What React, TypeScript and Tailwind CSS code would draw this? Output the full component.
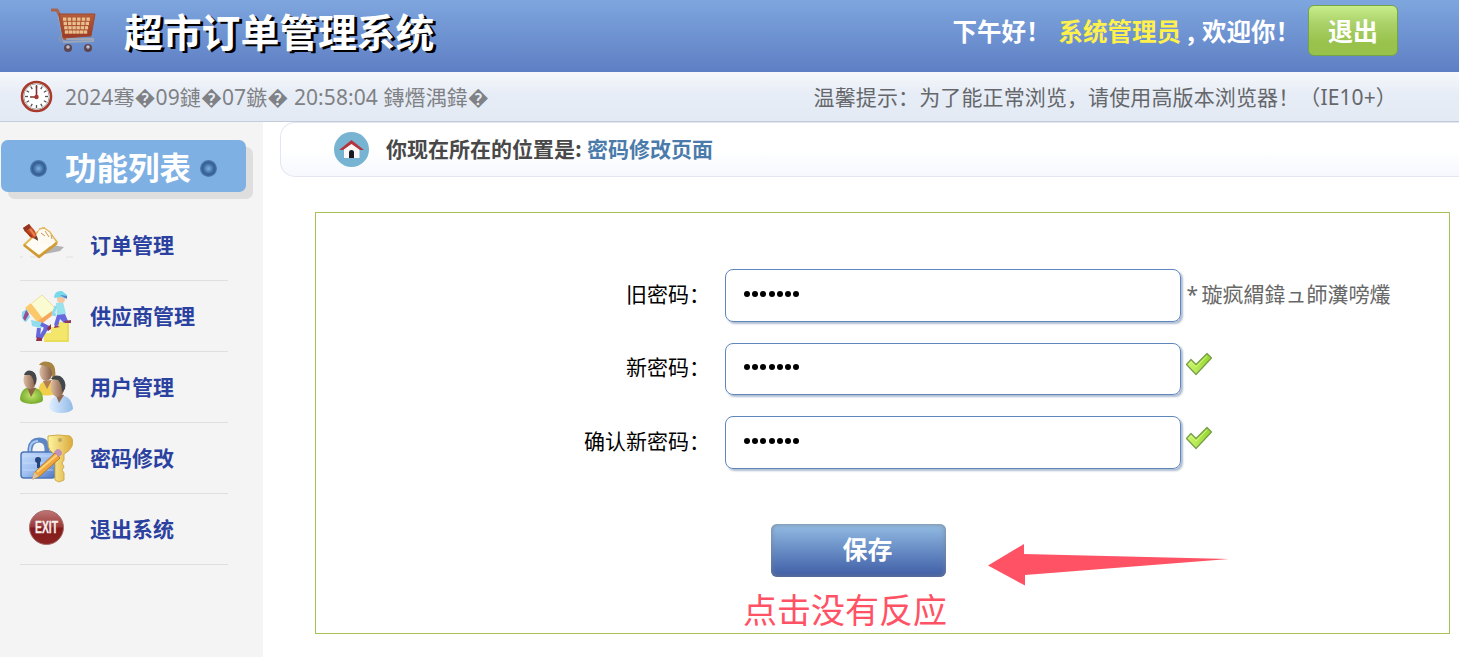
import { type ReactNode } from "react";

const menu: { label: string; icon: ReactNode }[] = [
  { label: "订单管理", icon: <OrderIcon /> },
  { label: "供应商管理", icon: <SupplierIcon /> },
  { label: "用户管理", icon: <UsersIcon /> },
  { label: "密码修改", icon: <PasswordIcon /> },
  { label: "退出系统", icon: <ExitIcon /> },
];

const fields = [
  { label: "旧密码：", valid: false },
  { label: "新密码：", valid: true },
  { label: "确认新密码：", valid: true },
];

export default function App() {
  return (
    <div className="flex h-[657px] w-[1459px] flex-col overflow-hidden bg-white font-['Noto_Sans','Noto_Sans_CJK_SC',sans-serif] text-[21px] leading-none whitespace-nowrap">
      <header className="flex h-[72px] shrink-0 items-start bg-linear-to-b from-[#7ea6de] to-[#5f7fc4] font-['Noto_Sans_CJK_SC',sans-serif] font-bold text-white">
        <div className="ml-[49px] pt-[7px]"><CartIcon /></div>
        <h1 className="ml-[27px] pt-[10px] text-[38.8px] leading-[40px] [text-shadow:3px_2px_0_#000]">超市订单管理系统</h1>
        <div className="ml-auto flex pt-[13px] text-[24.5px] leading-[36px]">
          <span className="w-[106px]">下午好！</span>
          <span className="text-[#fff04b]">系统管理员</span>
          <span className="ml-[6px] w-[15px]">,</span>
          <span className="w-[106px]">欢迎你！</span>
        </div>
        <button className="mt-[5px] mr-[61px] h-[51px] w-[90px] rounded-[6px] border border-[#74a446] bg-linear-to-b from-[#c8ee8c] via-[#abd169] via-35% to-[#98c24b] to-75% text-[25px]">退出</button>
      </header>

      <section className="flex h-[50px] shrink-0 items-center border-b border-[#c3ccdb] bg-linear-to-b from-[#f6f8fa] via-[#e7edf6] via-45% to-[#e3eaf3]">
        <div className="ml-5"><ClockIcon /></div>
        <span className="ml-[12px] pt-[2px] tracking-[0.09px] text-[#808184]">2024骞�09鏈�07鏃� 20:58:04 鏄熸湡鍏�</span>
        <span className="mr-[62px] ml-auto pt-[2px] tracking-[0.12px] text-[#65676b]">温馨提示：为了能正常浏览，请使用高版本浏览器！（IE10+）</span>
      </section>

      <div className="flex min-h-0 flex-1">
        <aside className="w-[263px] shrink-0 bg-[#f4f4f4] pt-[18px]">
          <div className="ml-px flex h-[52px] w-[245px] items-center rounded-[7px] bg-[#7fb0e3] pt-[5px] font-['Noto_Sans_CJK_SC',sans-serif] text-[31.5px] font-bold text-white shadow-[7px_7px_0_#dedede]">
            <Rivet className="ml-[29px]" />
            <span className="ml-[18px] w-[126px] pb-[4px]">功能列表</span>
            <Rivet className="ml-[9px]" />
          </div>
          <ul className="mt-[18px] ml-5 w-[208px]">
            {menu.map((m) => (
              <li key={m.label} className="flex h-[71px] items-center border-b border-[#dfdfe0] font-['Noto_Sans_CJK_SC',sans-serif] font-bold text-[#2b41a0]">
                <span className="w-[70px]">{m.icon}</span>
                <span className="pb-[2px]">{m.label}</span>
              </li>
            ))}
          </ul>
        </aside>

        <main className="min-w-0 flex-1 pl-[17px]">
          <div className="flex h-[55px] items-center rounded-l-[15px] border border-r-0 border-[#e3e5f2] bg-linear-to-b from-white from-50% to-[#f6f8fd] font-['Noto_Sans_CJK_SC',sans-serif] font-bold text-[#484848]">
            <div className="ml-[53px]"><HomeIcon /></div>
            <span className="ml-[17px] w-[201px] pb-[2px]">你现在所在的位置是:</span>
            <span className="pb-[2px] text-[#4a7baa]">密码修改页面</span>
          </div>

          <form className="relative mt-[35px] ml-[35px] h-[422px] w-[1135px] border border-[#a5c255] pt-[56px]" onSubmit={(e) => e.preventDefault()}>
            <div className="flex flex-col gap-[21px]">
              {fields.map((f) => (
                <div key={f.label} className="flex h-[52.5px] items-center">
                  <label className="w-[394px] pb-[2px] text-right text-black">{f.label}</label>
                  <div className="ml-[15px] flex h-full w-[455.5px] items-center gap-[2.2px] rounded-[8px] border border-[#5f87bd] pb-[3px] pl-[18px] shadow-[2px_2px_2px_#b0bdd2]">
                    {Array.from({ length: 7 }, (_, i) => (
                      <span key={i} className="size-[6px] rounded-full bg-black" />
                    ))}
                  </div>
                  {f.valid ? (
                    <div className="ml-[4px] pb-[9px]"><CheckIcon /></div>
                  ) : (
                    <span className="ml-[6px] flex pb-[2px] text-[#686868]">
                      <span className="w-[15px]">*</span>璇疯緭鍏ュ師瀵嗙爜
                    </span>
                  )}
                </div>
              ))}
            </div>
            <button className="mt-[55.5px] ml-[455px] block h-[53px] w-[175px] rounded-[6px] bg-linear-to-b from-[#94bde3] to-[#3f5ca5] pb-[4px] pl-[18px] font-['Noto_Sans_CJK_SC',sans-serif] text-[25px] font-bold text-white shadow-[inset_0_0_5px_#77818f]">保存</button>
            <p className="mt-[15px] ml-[427px] text-[34px] leading-[36px] text-[#ff5265]">点击没有反应</p>
            <svg className="absolute top-[330px] left-[672px]" width="242" height="44" viewBox="0 0 242 44">
              <path d="M0 22.500 36 1v10l205 5L37 32v10.500Z" fill="#ff5265" />
            </svg>
          </form>
        </main>
      </div>
    </div>
  );
}

function Rivet({ className }: { className: string }) {
  return <span className={`size-[17px] shrink-0 rounded-full bg-radial from-[#75aae0] from-5% via-[#345d92] via-50% to-[#5686bd] to-75% ${className}`} />;
}

function CartIcon() {
  return (
    <svg width="48" height="48" viewBox="0 0 48 48">
      <defs>
        <linearGradient id="basket" x1="0" y1="0" x2="0" y2="1"><stop stopColor="#b65d3b" /><stop offset="1" stopColor="#9b3827" /></linearGradient>
      </defs>
      <path d="m12 35-2-4 5-4" fill="none" stroke="#8795ac" strokeWidth="2" />
      <path d="m9 6 6 29 29-1v-2H16" fill="none" stroke="#9da7b8" strokeWidth="2" />
      <path d="M2 3h6l3 6 5 24" fill="none" stroke="#a8644e" strokeWidth="3" strokeLinejoin="round" />
      <path d="M10 7h36l-4 22-28 2Z" fill="url(#basket)" stroke="#9d4930" />
      <g fill="#e9c08b">
        {[0, 1, 2, 3].map((r) =>
          [0, 1, 2, 3, 4, 5].map((c) => (
            <rect key={`${r}-${c}`} x={14 + r * 0.6 + c * (4.7 - r * 0.3)} y={10.5 + r * 4.3} width="3.4" height="3.3" />
          ))
        )}
      </g>
      <circle cx="19" cy="41" r="4" fill="#5d4650" /><circle cx="19" cy="40" r="1.8" fill="#c2bfc8" />
      <circle cx="39" cy="41" r="4" fill="#5d4650" /><circle cx="39" cy="40" r="1.8" fill="#c2bfc8" />
    </svg>
  );
}

function ClockIcon() {
  return (
    <svg width="33" height="33" viewBox="0 0 33 33">
      <circle cx="16.500" cy="16.500" r="14.500" fill="#fff" stroke="#a83b2b" strokeWidth="2.600" />
      <circle cx="16.500" cy="16.500" r="12.700" fill="none" stroke="#a8a8a8" />
      {Array.from({ length: 12 }, (_, i) => (
        <path key={i} d="M16.500 5v3" stroke="#555" strokeWidth="1.300" transform={`rotate(${i * 30} 16.500 16.500)`} />
      ))}
      <path d="M16.500 6v11M10 17h7" stroke="#7d3330" strokeWidth="1.600" />
      <circle cx="16.500" cy="17" r="2.200" fill="#a9372d" />
    </svg>
  );
}

function OrderIcon() {
  return (
    <svg width="53" height="53" viewBox="0 0 53 53">
      <path d="m20 36 12-10 12 2-4 4Z" fill="#b3b3b3" />
      <path d="m4 26 16-15 4-2 13 14-18 14Z" fill="#fffdf5" stroke="#e2b857" strokeWidth="2" strokeLinejoin="round" />
      <path d="M4 26 19 38l18-14" fill="none" stroke="#d09a35" strokeWidth="2.400" strokeLinejoin="round" />
      <path d="m17 15 3-5 6-1 7 5 3 8-5 5-10-2Z" fill="#fffaf0" />
      <path d="m19 10 5-1 6 4 6 9" fill="none" stroke="#e2b761" strokeWidth="1.400" />
      <path d="m21 14 4 3m0-5 4 6m2-2 1 4" fill="none" stroke="#c39a5c" />
      <path d="m3 9 6-4 6 7 3 9-8-3Z" fill="#c84e25" />
      <path d="m3 9 6-4 2 3-6 5Z" fill="#8f3522" />
      <path d="m6 12 6 6" stroke="#a73717" strokeWidth="2" /><path d="m10 10 5 7" stroke="#e88754" strokeWidth="2" />
      <path d="m14 19 3-2 1 5Z" fill="#5d443b" />
      <path d="M0 38h3m7 0h6m30 0h7" stroke="#e0e0e0" />
    </svg>
  );
}

function SupplierIcon() {
  return (
    <svg width="53" height="53" viewBox="0 0 53 53">
      <path d="M24 52V43h7v-6h7v-5h11v20Z" fill="#f3e66a" /><path d="M25 51h23V33" fill="none" stroke="#dfd34b" />
      <path d="m5 18 6-5 14 18-5 4Z" fill="#fcc86c" /><path d="m11 13 11-8 14 13-12 12Z" fill="#fafbd0" /><path d="m20 35 14-11-2-3-14 10Z" fill="#f7a65a" />
      <path d="m12 13 10-8 13 13" fill="none" stroke="#f0dda4" />
      <path d="m2 22 5-3 3 8-4 5c-3-1-5-5-4-8" fill="#86dcee" /><path d="m6 20 3 4-4 7-2-3Z" fill="#9a4b93" />
      <path d="m11 30 10 2 4 4-4 2-9-2Z" fill="#91dced" />
      <path d="m21 34 6 3-6 10-3-1 1-8m5-1 5 2" fill="none" stroke="#6767dc" strokeWidth="4" />
      <path d="m17 47 5 1v3h-6Zm10-9 4-4v5l-3 2Z" fill="#91324c" />
      <path d="m36 13 7-1 3 12-9 2Z" fill="#98e2ed" /><path d="m36 16-3 8 3 1" fill="none" stroke="#91daea" strokeWidth="3" />
      <path d="m37 25 8-1 3 7-4 2-4-4-2 7-4-1Z" fill="#6767de" /><path d="m44 31 7-1v3h-6Zm-9 4 5 2-6 1Z" fill="#8a3c63" />
      <circle cx="41" cy="9" r="4" fill="#f6c5a3" /><path d="M34 7q1-7 8-6l5 4v3l-7-1-5 1Z" fill="#77d9e9" /><path d="m40 5 7 1v3Z" fill="#5183cc" />
    </svg>
  );
}

function UsersIcon() {
  return (
    <svg width="53" height="53" viewBox="0 0 53 53">
      <defs>
        <linearGradient id="skin"><stop stopColor="#dfbda2" /><stop offset="1" stopColor="#805743" /></linearGradient>
        <radialGradient id="green"><stop stopColor="#c1e56b" /><stop offset="1" stopColor="#7aad2f" /></radialGradient>
        <linearGradient id="blue"><stop stopColor="#e0efff" /><stop offset="1" stopColor="#92bae8" /></linearGradient>
      </defs>
      <path d="M18 31q1-11 9-11 10 1 8 13-8 3-17 0" fill="#f2cf4b" />
      <path d="m23 20 4 8 5-9" fill="#b27e57" /><ellipse cx="26" cy="11" rx="6.500" ry="9" fill="url(#skin)" />
      <path d="M19 4Q22-1 29 1q8 2 6 17l-3 1q1-9-3-13-5-2-10-2" fill="#a88443" />
      <path d="M0 38q1-12 11-12 12 1 12 13 0 3-12 4Q0 42 0 38" fill="url(#green)" />
      <path d="m7 26 4 10 5-9" fill="#8e6549" /><ellipse cx="10" cy="19" rx="6.500" ry="9" fill="url(#skin)" /><path d="M4 14q2-6 8-4 6 3 4 11l-2 3q0-7-4-10l-6 0" fill="#45474a" />
      <path d="M29 47q1-12 11-13 12 1 13 14-3 4-12 4-9 0-12-5" fill="url(#blue)" />
      <path d="m35 32 4 10 5-8" fill="#936a50" /><ellipse cx="37.500" cy="26" rx="7" ry="10" fill="url(#skin)" /><path d="M31 18q3-5 9-3 7 4 5 13l-3 3q0-8-4-12l-7-1" fill="#42484a" />
    </svg>
  );
}

function PasswordIcon() {
  return (
    <svg className="mt-[4px]" width="53" height="53" viewBox="0 0 53 53">
      <defs>
        <linearGradient id="lock" x2="1" y2="1"><stop stopColor="#c5dcfa" /><stop offset=".5" stopColor="#9dbff1" /><stop offset="1" stopColor="#4b75c2" /></linearGradient>
        <linearGradient id="key"><stop stopColor="#fff5a0" /><stop offset="1" stopColor="#daaa3d" /></linearGradient>
      </defs>
      <path d="M10 20v-5q1-9 9-9t8 9v5" fill="none" stroke="#5c86c6" strokeWidth="5" /><path d="M10 19v-5q1-7 8-7" fill="none" stroke="#a9c7ef" strokeWidth="2" />
      <rect x="1" y="18" width="34" height="26" rx="3" fill="url(#lock)" stroke="#4d75b5" strokeWidth="1.500" />
      <path d="M3 22h30M3 29h30M3 36h30" stroke="#d5e5fc" opacity=".6" />
      <circle cx="18" cy="26" r="3" fill="#25467a" /><path d="M17 26h3v8h-3Z" fill="#25467a" />
      <path d="M28 2q9-2 22 0 4 3 2 10-2 5-8 8v6l-2 3 2 4-2 3 2 3v7l-5 2-4-2V20q-7-3-7-11Z" fill="url(#key)" stroke="#d1ac48" />
      <circle cx="40" cy="6" r="2" fill="#b9a765" />
      <path d="m14 39 21-20 5 5-20 18-7 3Z" fill="#eea53d" stroke="#b8782e" /><path d="m17 38 20-17" stroke="#ffd27a" strokeWidth="2" />
      <path d="m34 18 3-3q5 0 5 5l-3 3Z" fill="#bf91bb" /><path d="m14 38 5 4-7 4Z" fill="#ddc29b" />
    </svg>
  );
}

function ExitIcon() {
  return (
    <svg width="53" height="53" viewBox="0 0 53 53">
      <defs>
        <linearGradient id="exit" x1="0" y1="0" x2="0" y2="1"><stop stopColor="#bd7775" /><stop offset=".48" stopColor="#9a3838" /><stop offset=".52" stopColor="#831a1b" /><stop offset="1" stopColor="#8b2422" /></linearGradient>
      </defs>
      <circle cx="26.500" cy="24.500" r="17" fill="url(#exit)" stroke="#a76b69" />
      <text x="26.500" y="29.500" textAnchor="middle" textLength="23" lengthAdjust="spacingAndGlyphs" fill="#f6eeee" stroke="#f6eeee" strokeWidth=".3" fontSize="16" fontWeight="700" fontFamily="Liberation Sans">EXIT</text>
    </svg>
  );
}

function HomeIcon() {
  return (
    <svg width="35" height="35" viewBox="0 0 35 35">
      <circle cx="17.500" cy="17.500" r="17.500" fill="#77b4d2" />
      <path d="m10 17 7.500-6 8 6v9H10Z" fill="#fbf8f8" /><path d="M15 26v-6q0-2 2.500-2t2.500 2v6Z" fill="#171b20" />
      <path d="m5 18 12.500-10L30 18h-4l-8.500-6L9 18Z" fill="#b4343f" />
    </svg>
  );
}

function CheckIcon() {
  return (
    <svg width="28" height="24" viewBox="0 0 28 24">
      <defs><linearGradient id="check"><stop stopColor="#cff66d" /><stop offset="1" stopColor="#91d52e" /></linearGradient></defs>
      <path d="m1.500 12.500 4.500-5 5 5L22 1.500l4.500 4.500L11 22.500Z" fill="url(#check)" stroke="#759c48" strokeWidth="1.200" strokeLinejoin="round" />
      <path d="m4 12 2-2 5 5L22 4" fill="none" stroke="#dfff91" opacity=".7" />
    </svg>
  );
}
